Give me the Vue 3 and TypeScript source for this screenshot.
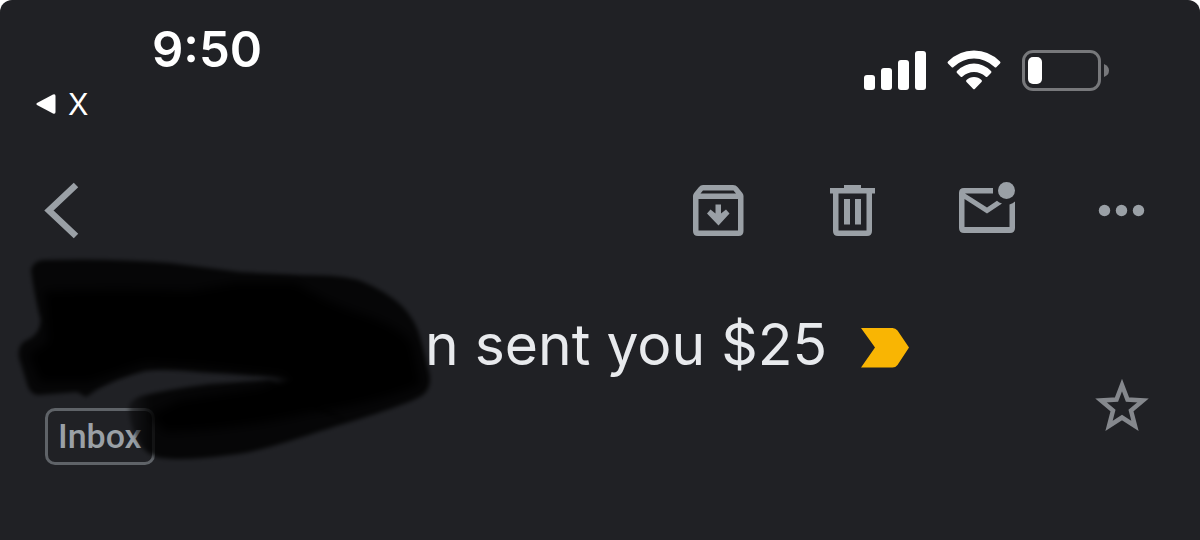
<script setup lang="ts">
import { ref } from 'vue'

const time = '9:50'
const previousApp = 'X'
const subject = 'n sent you $25'
const folder = 'Inbox'
const signalBars = [
  { x: 0, h: 15 },
  { x: 17, h: 22 },
  { x: 34, h: 30 },
  { x: 51, h: 39 },
]
const starred = ref(false)
</script>

<template>
  <div class="screen">
    <header class="status">
      <div class="status-left">
        <time class="clock">{{ time }}</time>
        <a class="return" href="#">
          <svg width="20" height="20" viewBox="0 0 20 20" aria-hidden="true">
            <path d="M17 .5 1 9q-1.500 1 0 2L17 19.500q2.500 1 2.500-1.500V2q0-2.500-2.500-1.500Z" fill="#fff" />
          </svg>
          <span>{{ previousApp }}</span>
        </a>
      </div>
      <div class="status-right">
        <svg width="62" height="40" viewBox="0 0 62 40" role="img" aria-label="Signal">
          <rect v-for="b in signalBars" :key="b.x" :x="b.x" :y="40 - b.h" width="11" :height="b.h" rx="3" fill="#fff" />
        </svg>
        <svg width="54" height="40" viewBox="0 0 54 40" role="img" aria-label="Wi-Fi">
          <g fill="#fff">
            <path d="M1 11.500Q0 12.500 1 13.500L4.500 17q1 1 2 0 9-8.500 20.500-8.500T47.500 17q1 1 2 0L53 13.500q1-1 0-2Q42 .5 27 .5T1 11.500Z" />
            <path d="M10 21q-1 1 0 2l3.500 3.500q1 1 2 0 5-4.500 11.500-4.500t11.500 4.500q1 1 2 0L44 23q1-1 0-2-7.500-7.500-17-7.500T10 21Z" />
            <path d="M19.500 30q-1 1 0 2l6.500 6.700q1 1 2 0L34.500 32q1-1 0-2-3-3-7.500-3t-7.500 3Z" />
          </g>
        </svg>
        <svg width="88" height="40" viewBox="0 0 88 40" role="img" aria-label="Battery low">
          <rect x="1.500" y="1.500" width="76" height="38" rx="9.500" fill="none" stroke="#77787b" stroke-width="3" />
          <rect x="6" y="7" width="14" height="27" rx="5" fill="#fff" />
          <path d="M82 14q5 2 5 6.500T82 27Z" fill="#77787b" />
        </svg>
      </div>
    </header>

    <nav class="toolbar" aria-label="Message actions">
      <button type="button" aria-label="Back">
        <svg width="34" height="56" viewBox="0 0 34 56"><path d="M31 3 4 28.500 31 54" fill="none" stroke="#9aa0a6" stroke-width="6.500" /></svg>
      </button>
      <div class="actions">
        <button type="button" aria-label="Archive">
          <svg width="52" height="56" viewBox="0 0 52 56">
            <path fill="#9aa0a6" fill-rule="evenodd" d="M10 3H40Q43 3 44.500 5L49 10.500Q50.500 12 50.500 14V49q0 5-5 5H5q-5 0-5-5V14Q0 12 1.500 10.500L6 5Q7.500 3 10 3ZM10 8.500 7.500 11.500H43L40.500 8.500ZM5.500 17V48.500H45V17Z" />
            <path fill="#9aa0a6" d="M22.500 22.500h5.500v9l5-4 3.500 4L25.500 43.500 14 31.500l3.500-4 5 4Z" />
          </svg>
        </button>
        <button type="button" aria-label="Delete">
          <svg width="46" height="56" viewBox="0 0 46 56" fill="#9aa0a6">
            <path fill-rule="evenodd" d="M15 3H32V6H46v5.500H43V49q0 5-5 5H9q-5 0-5-5V11.500H1V6H15ZM9.500 11.500V48.500H37.500V11.500Z" />
            <path d="M15 17h6v25.500h-6ZM26 17h6v25.500h-6Z" />
          </svg>
        </button>
        <button type="button" aria-label="Mark as unread">
          <svg width="56" height="56" viewBox="0 0 56 56" fill="#9aa0a6">
            <path d="M34 6H5Q0 6 0 11V46q0 5 5 5H51q5 0 5-5V19.500q-2 2-5.500 3V45H5.500V17L28 31.500 43 21.500q-3-.5-5-2.700L28 25.500 6 11.500H34Z" />
            <circle cx="47.500" cy="8.500" r="8.500" />
          </svg>
        </button>
        <button type="button" aria-label="More options">
          <svg width="46" height="56" viewBox="0 0 46 56" fill="#9aa0a6">
            <circle cx="5.500" cy="28.500" r="5.700" /><circle cx="22.500" cy="28.500" r="5.700" /><circle cx="39.500" cy="28.500" r="5.700" />
          </svg>
        </button>
      </div>
    </nav>

    <main class="message">
      <div class="details">
        <h1 class="subject">
          <span>{{ subject }}</span>
          <svg width="48" height="46" viewBox="0 0 48 46" role="img" aria-label="Important">
            <path d="M0 6H31.500q3 0 5 2.500L48 25.500 36.500 43q-2 2.500-5 2.500H0L14 25.500Z" fill="#f9b503" />
          </svg>
        </h1>
        <button type="button" class="folder">{{ folder }}</button>
      </div>
      <button type="button" class="star" aria-label="Star" :aria-pressed="starred" @click="starred = !starred">
        <svg width="56" height="54" viewBox="0 0 56 54">
          <path d="M28 6 33.500 20.500 49 21.500 37 31.500 41 47 28 38.500 15 47 19 31.500 7 21.500 22.500 20.500Z" :fill="starred ? '#f9b503' : 'none'" stroke="#85888d" stroke-width="4.500" stroke-miterlimit="10" />
        </svg>
      </button>

      <svg class="scribble" width="450" height="230" viewBox="0 0 450 230" aria-hidden="true">
        <defs>
          <filter id="edge" x="-10%" y="-10%" width="120%" height="120%"><feGaussianBlur stdDeviation="2" /></filter>
          <filter id="core" x="-10%" y="-10%" width="120%" height="120%"><feGaussianBlur stdDeviation="5" /></filter>
          <linearGradient id="tail" gradientUnits="userSpaceOnUse" x1="128" y1="0" x2="165" y2="0">
            <stop offset="0" stop-opacity=".35" /><stop offset=".6" stop-opacity=".8" /><stop offset="1" stop-opacity=".82" />
          </linearGradient>
        </defs>
        <g filter="url(#edge)">
          <path fill-opacity=".82" d="M31 20Q33 11 43 10 110 8 170 13L240 22 300 25Q345 25 361 31 386 41 402 56 416 70 421 90L428 118Q434 136 423 145C412 152 385 161 350 172L270 140 300 129Q250 124 200 122 165 118 145 121 120 127 98 139L86 147 77 142 38 145Q31 144 28 137L19 108Q17 94 27 90 40 84 41 70Q34 45 31 20Z" />
          <path fill="url(#tail)" d="M129 161Q127 151 141 146 170 139 210 134L270 130 350 172C300 187 265 201 230 205Q180 212 156 207 144 202 140 194 130 178 129 161Z" />
        </g>
        <g filter="url(#core)">
          <path d="M44 41Q120 38 190 41L235 33 296 33Q330 55 365 65 400 77 412 93L421 135Q370 155 310 163 240 180 165 182L150 165 180 150 260 138 290 126 200 116 145 113 90 132 40 132 28 104 48 92Z" />
        </g>
      </svg>
    </main>
  </div>
</template>

<style>
body {
  margin: 0;
  background: #fff;
}
</style>

<style scoped>
.screen {
  min-height: 100vh;
  background: #202125;
  border-radius: 12px 12px 0 0;
  font-family: Inter, "Liberation Sans", sans-serif;
  color: #fff;
}
.status,
.actions,
.status-right,
.return,
.subject {
  display: flex;
  align-items: center;
}
.status {
  height: 140px;
  padding: 0 90px 0 36px;
  justify-content: space-between;
}
.status-left {
  padding-top: 4px;
}
.clock {
  display: block;
  padding-left: 116px;
  font-size: 49px;
  line-height: 60px;
  font-weight: 600;
}
.return {
  gap: 12px;
  padding-top: 4px;
  color: #fff;
  text-decoration: none;
  font-size: 30px;
  line-height: 40px;
}
.status-right {
  gap: 21px;
}
svg {
  display: block;
  flex: none;
  overflow: visible;
}
button {
  padding: 0;
  border: 0;
  background: none;
  font: inherit;
  color: inherit;
  cursor: pointer;
}
.toolbar {
  display: flex;
  align-items: center;
  justify-content: space-between;
  padding: 42px 55px 12px 45px;
}
.actions {
  gap: 84px;
}
.message {
  position: relative;
  display: flex;
  justify-content: space-between;
  padding: 50px 50px 60px 45px;
}
.subject {
  margin: 0 0 18px;
  padding-left: 380px;
  gap: 34px;
  font-size: 57px;
  line-height: 90px;
  font-weight: 400;
  color: #e8eaed;
}
.folder {
  padding: 0 10px;
  border: 3px solid #5f6368;
  border-radius: 10px;
  font-family: Roboto, "Noto Sans", sans-serif;
  font-size: 34px;
  line-height: 51px;
  font-weight: 500;
  color: #9aa0a6;
}
.star {
  align-self: flex-end;
  padding-bottom: 32px;
}
.scribble {
  position: absolute;
  top: 0;
  left: 0;
  pointer-events: none;
}
</style>
